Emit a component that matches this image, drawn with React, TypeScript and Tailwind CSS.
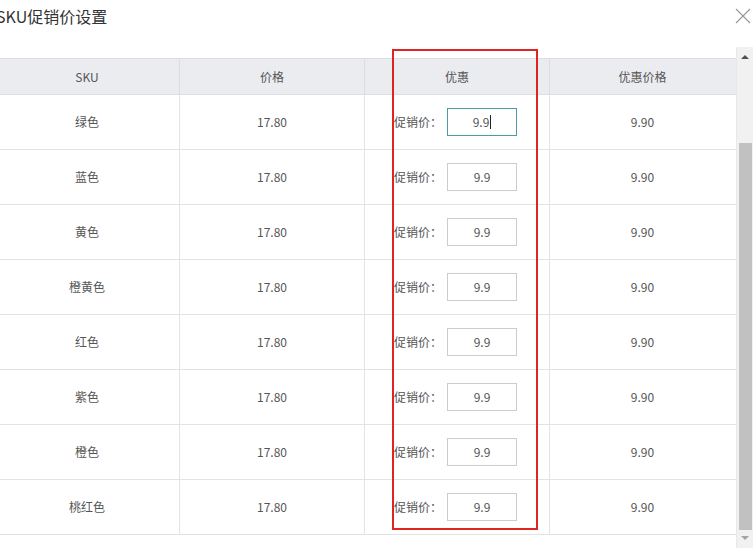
const rows = ['绿色', '蓝色', '黄色', '橙黄色', '红色', '紫色', '橙色', '桃红色'];

const font = { fontFamily: '"Noto Sans CJK SC", "Liberation Sans", sans-serif' };

export default function App() {
  return (
    <div className="relative w-[756px] h-[548px] overflow-hidden bg-white text-[12px] text-[#555]" style={font}>
      {/* 标题栏 */}
      <div className="flex items-center h-[47px] pb-[16px]">
        <span className="ml-[-4px] text-[16px] text-[#333] leading-none">SKU促销价设置</span>
        <svg width="16" height="16" viewBox="0 0 16 16" className="ml-auto mr-[5px] mt-[1px]">
          <path d="M1 1L15 15M15 1L1 15" stroke="#9a9a9a" strokeWidth="1.2" fill="none" />
        </svg>
      </div>

      <div className="flex h-[501px]">
        <div className="w-[736px] pt-[11px] overflow-hidden">
          <div className="ml-[-5px]">
            {/* 表头 */}
            <div className="flex h-[37px] bg-[#ebecf0] border-y border-[#dcdde2]">
              {['SKU', '价格', '优惠', '优惠价格'].map((h, i) => (
                <div
                  key={h}
                  className={`w-[185px] flex items-center justify-center text-[#555] ${i < 3 ? 'border-r border-[#dcdde2]' : ''}`}
                >
                  {h}
                </div>
              ))}
            </div>
            {rows.map((name, idx) => (
              <div key={name} className="flex h-[55px] border-b border-[#e3e3e3]">
                <div className="w-[185px] flex items-center justify-center border-r border-[#e3e3e3]">{name}</div>
                <div className="w-[185px] flex items-center justify-center border-r border-[#e3e3e3]">17.80</div>
                <div className="w-[185px] flex items-center pl-[29px] border-r border-[#e3e3e3]">
                  <span className="w-[53px]">促销价：</span>
                  <div
                    className={`w-[70px] h-[28px] flex items-center justify-center border ${
                      idx === 0 ? 'border-[#4a9aa8]' : 'border-[#cccccc]'
                    }`}
                  >
                    9.9{idx === 0 && <span className="ml-[1px] w-px h-[14px] bg-[#222]" />}
                  </div>
                </div>
                <div className="w-[185px] flex items-center justify-center">9.90</div>
              </div>
            ))}
          </div>
        </div>

        {/* 滚动条 */}
        <div className="w-[17px] bg-[#f1f1f1] flex flex-col items-center border-l border-[#e8e8e8]">
          <div className="h-[15px] flex items-center justify-center mt-[2px]">
            <div className="w-0 h-0 border-x-[4px] border-x-transparent border-b-[4px] border-b-[#505050]" />
          </div>
          <div className="mt-[79px] w-[13px] h-[387px] bg-[#c1c1c1]" />
          <div className="h-[15px] flex items-center justify-center">
            <div className="w-0 h-0 border-x-[4px] border-x-transparent border-t-[4px] border-t-[#a3a3a3]" />
          </div>
        </div>
      </div>

      {/* 红色标注框 */}
      <div className="absolute left-[392px] top-[49px] w-[146px] h-[481px] border-2 border-[#e02424]" />
    </div>
  );
}
